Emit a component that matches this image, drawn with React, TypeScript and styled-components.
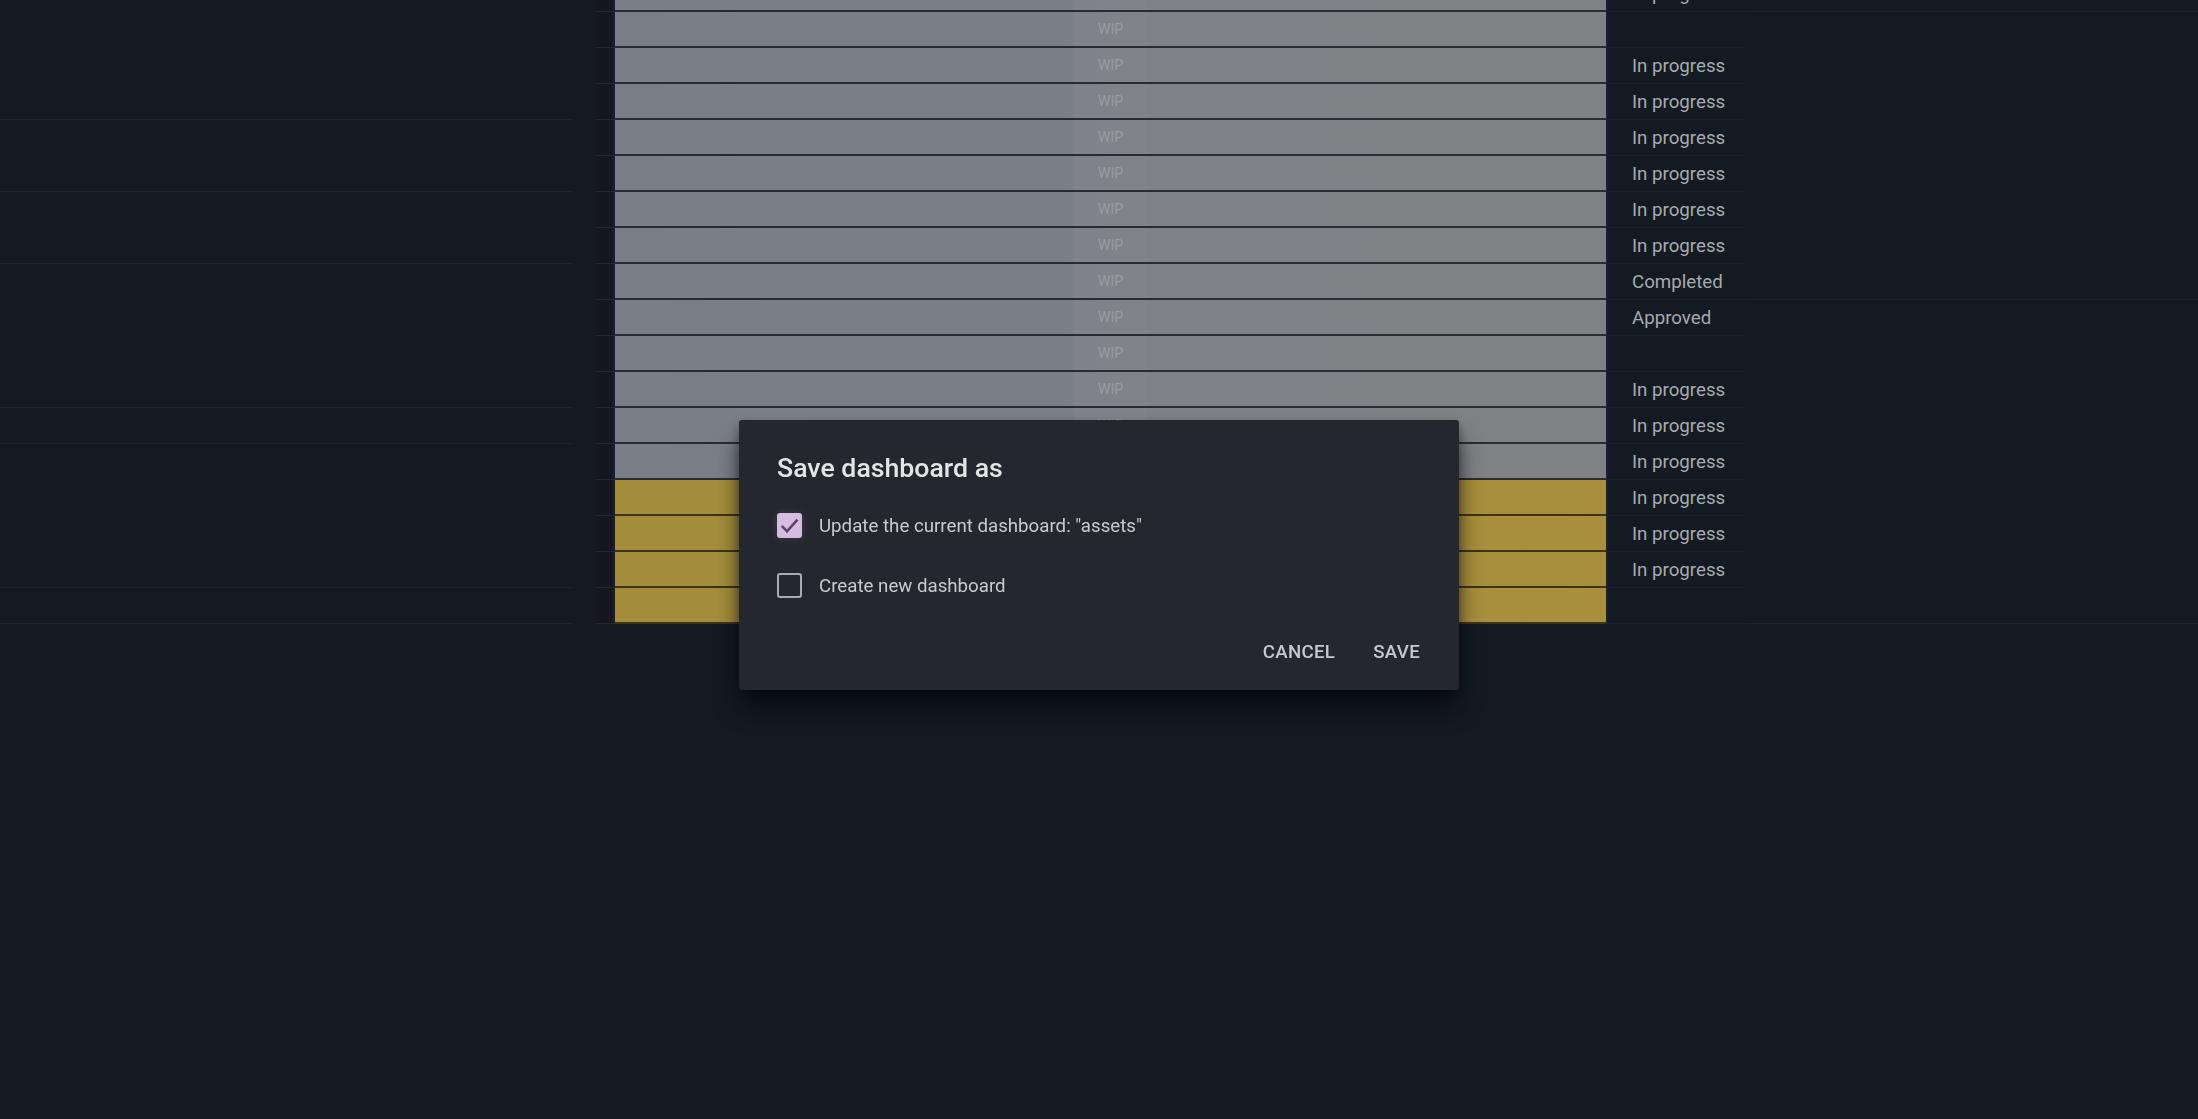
import React from "react";
import styled, { createGlobalStyle } from "styled-components";

const GlobalStyle = createGlobalStyle`
  html, body {
    margin: 0;
    padding: 0;
    height: 100%;
    overflow: hidden;
    background: #131a22;
  }
  body {
    font-family: Roboto, "Liberation Sans", sans-serif;
  }
`;

type Tone = "grey" | "gold";

interface RowData {
  status: string;
  tone: Tone;
  left?: boolean;
  wide?: boolean;
}

const rows: RowData[] = [
  { status: "In progress", tone: "grey", wide: true },
  { status: "", tone: "grey" },
  { status: "In progress", tone: "grey" },
  { status: "In progress", tone: "grey", left: true },
  { status: "In progress", tone: "grey" },
  { status: "In progress", tone: "grey", left: true },
  { status: "In progress", tone: "grey" },
  { status: "In progress", tone: "grey", left: true },
  { status: "Completed", tone: "grey", wide: true },
  { status: "Approved", tone: "grey" },
  { status: "", tone: "grey" },
  { status: "In progress", tone: "grey", left: true },
  { status: "In progress", tone: "grey", left: true },
  { status: "In progress", tone: "grey" },
  { status: "In progress", tone: "gold" },
  { status: "In progress", tone: "gold" },
  { status: "In progress", tone: "gold", left: true },
  { status: "", tone: "gold", left: true, wide: true },
];

const Page = styled.div`
  width: 100vw;
  height: 100vh;
  background: #131a22;
  overflow: hidden;
`;

const Table = styled.div`
  display: flex;
  flex-direction: column;
  margin-top: -24px;
`;

const Row = styled.div`
  display: grid;
  grid-template-columns: 571px 25px 19px 991px 139px 1fr;
  height: 36px;
`;

const LeftCell = styled.div<{ $line?: boolean }>`
  box-sizing: border-box;
  border-bottom: 1px solid ${(p) => (p.$line ? "#1f2630" : "transparent")};
`;

const Spacer = styled.div``;

const Tick = styled.div`
  box-sizing: border-box;
  background: #15161f;
  border-bottom: 1px solid #232732;
  box-shadow: inset -2px 0 0 #1b1c3a;
`;

const Bar = styled.div<{ $tone: Tone }>`
  box-sizing: border-box;
  display: flex;
  align-items: center;
  justify-content: center;
  background: ${(p) =>
    p.$tone === "gold"
      ? "linear-gradient(90deg, #a38c3b 0%, #a68e3c 50%, #a88f3d 100%)"
      : "linear-gradient(90deg, #7a7e87 0%, #7b7f88 45%, #7f8186 55%, #808185 100%)"};
  border-bottom: 2px solid ${(p) => (p.$tone === "gold" ? "#3e3418" : "#2a2c33")};
  box-shadow: 2px 0 0 #1b1c3a;
`;

const Wip = styled.span`
  padding: 0 24px;
  height: 100%;
  display: flex;
  align-items: center;
  font-size: 14px;
  color: #9a9ca1;
  background: rgba(255, 255, 255, 0.025);
`;

const Status = styled.div`
  box-sizing: border-box;
  display: flex;
  align-items: center;
  padding-left: 26px;
  font-size: 18.7px;
  color: #a7aaaf;
  white-space: nowrap;
  border-bottom: 1px solid #1b2129;
`;

const Rest = styled.div<{ $line?: boolean }>`
  box-sizing: border-box;
  border-bottom: 1px solid ${(p) => (p.$line ? "#1e252f" : "transparent")};
`;

const Backdrop = styled.div`
  position: fixed;
  inset: 0;
  display: flex;
  align-items: center;
  justify-content: center;
`;

const Dialog = styled.div`
  box-sizing: border-box;
  width: 720px;
  margin-top: -10px;
  padding: 30px 28px 14px 38px;
  background: #24272d;
  border-radius: 3px;
  box-shadow: 0 18px 22px rgba(4, 7, 12, 0.6), 0 4px 10px rgba(0, 0, 0, 0.3);
  display: flex;
  flex-direction: column;
`;

const Title = styled.h2`
  margin: 0;
  font-size: 26.7px;
  line-height: 36px;
  font-weight: 500;
  color: #e4e5e7;
`;

const Options = styled.div`
  display: flex;
  flex-direction: column;
  gap: 16px;
  margin-top: 18px;
`;

const Option = styled.label`
  display: flex;
  align-items: center;
  gap: 17px;
  height: 44px;
  font-size: 18.7px;
  line-height: 26px;
  color: #c8cace;
`;

const Box = styled.span<{ $checked?: boolean }>`
  box-sizing: border-box;
  width: 25px;
  height: 25px;
  border-radius: 3px;
  display: flex;
  align-items: center;
  justify-content: center;
  background: ${(p) => (p.$checked ? "#d7bce2" : "transparent")};
  border: ${(p) => (p.$checked ? "none" : "2px solid #a9acb2")};
  box-shadow: ${(p) => (p.$checked ? "0 0 8px rgba(200, 160, 220, 0.18)" : "none")};
`;

const Actions = styled.div`
  display: flex;
  justify-content: flex-end;
  gap: 16px;
  margin-top: 20px;
`;

const Button = styled.button`
  height: 48px;
  padding: 0 11px;
  border: none;
  background: transparent;
  font-family: Roboto, "Liberation Sans", sans-serif;
  font-size: 18.7px;
  font-weight: 500;
  letter-spacing: 0.3px;
  text-transform: uppercase;
  color: #c6c9d2;
`;

function Check({ checked }: { checked?: boolean }) {
  return (
    <Box $checked={checked}>
      {checked && (
        <svg width="25" height="25" viewBox="0 0 24 24">
          <path d="M4.6 12.4l5 5.2L19.6 6.4" fill="none" stroke="#5e3f6e" strokeWidth="2.4" />
        </svg>
      )}
    </Box>
  );
}

export default function App() {
  return (
    <>
      <GlobalStyle />
      <Page>
        <Table>
          {rows.map((r, i) => (
            <Row key={i}>
              <LeftCell $line={r.left} />
              <Spacer />
              <Tick />
              <Bar $tone={r.tone}>{r.tone === "grey" && <Wip>WIP</Wip>}</Bar>
              <Status>{r.status}</Status>
              <Rest $line={r.wide} />
            </Row>
          ))}
        </Table>
      </Page>
      <Backdrop>
        <Dialog>
          <Title>Save dashboard as</Title>
          <Options>
            <Option>
              <Check checked />
              Update the current dashboard: "assets"
            </Option>
            <Option>
              <Check />
              Create new dashboard
            </Option>
          </Options>
          <Actions>
            <Button>Cancel</Button>
            <Button>Save</Button>
          </Actions>
        </Dialog>
      </Backdrop>
    </>
  );
}
